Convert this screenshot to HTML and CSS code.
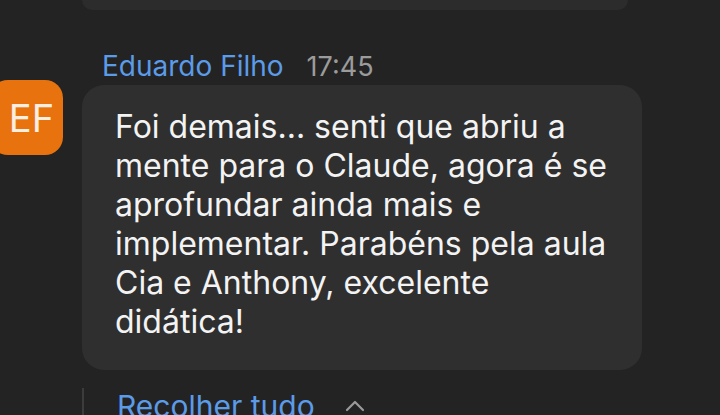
FILE: index.html
```html
<!DOCTYPE html>
<html lang="pt-BR">
<head>
  <meta charset="UTF-8" />
  <meta name="viewport" content="width=device-width, initial-scale=1.0"/>
  <title>Comentários</title>
  <link rel="stylesheet" href="styles.css">
</head>
<body>
  <div class="thread">
    <div class="prev-bubble"></div>

    <div class="message">
      <div class="avatar">EF</div>
      <div class="content">
        <div class="meta">
          <span class="author">Eduardo Filho</span>
          <span class="time">17:45</span>
        </div>
        <div class="bubble">
          Foi demais... senti que abriu a mente para o Claude, agora é se aprofundar ainda mais e implementar. Parabéns pela aula Cia e Anthony, excelente didática!
        </div>
      </div>
    </div>

    <div class="collapse">
      <span class="collapse-link">Recolher tudo</span>
      <svg class="chevron" width="20" height="12" viewBox="0 0 20 12">
        <path d="M2 10 L10 2 L18 10" fill="none" stroke="#9a9a9a" stroke-width="2.2" stroke-linecap="round" stroke-linejoin="round"/>
      </svg>
    </div>
  </div>
</body>
</html>
```

FILE: styles.css
```css
body {
  margin: 0;
  background: #232323;
  font-family: Inter, 'Liberation Sans', sans-serif;
  overflow: hidden;
  height: 415px;
}

.thread {
  width: 720px;
}

.prev-bubble {
  margin-left: 82px;
  width: 546px;
  height: 10px;
  background: #2c2c2c;
  border-radius: 0 0 22px 22px;
}

.message {
  display: flex;
  margin-top: 37px;
}

.avatar {
  flex: none;
  width: 73px;
  height: 75px;
  margin-left: -10px;
  margin-top: 33px;
  border-radius: 18px;
  background: #e8730e;
  color: #fdeee2;
  font-size: 38px;
  display: flex;
  align-items: center;
  justify-content: center;
  padding-left: 10px;
  box-sizing: border-box;
}

.content {
  margin-left: 19px;
  width: 560px;
}

.meta {
  padding-left: 20px;
  height: 38px;
  display: flex;
  align-items: center;
  gap: 23px;
  font-size: 28px;
}

.author {
  color: #5b9be8;
}

.time {
  color: #9b9b9b;
  font-size: 27px;
}

.bubble {
  background: #2f2f2f;
  border-radius: 22px;
  padding: 22px 33px 29px 33px;
  color: #f3f3f3;
  font-size: 32px;
  line-height: 39px;
}

.collapse {
  margin-top: 18px;
  margin-left: 82px;
  border-left: 2px solid #3c3c3c;
  padding-left: 33px;
  height: 40px;
  display: flex;
  align-items: flex-start;
  gap: 30px;
}

.collapse-link {
  color: #5b9be8;
  font-size: 30px;
  line-height: 36px;
}

.chevron {
  margin-top: 12px;
}
```
